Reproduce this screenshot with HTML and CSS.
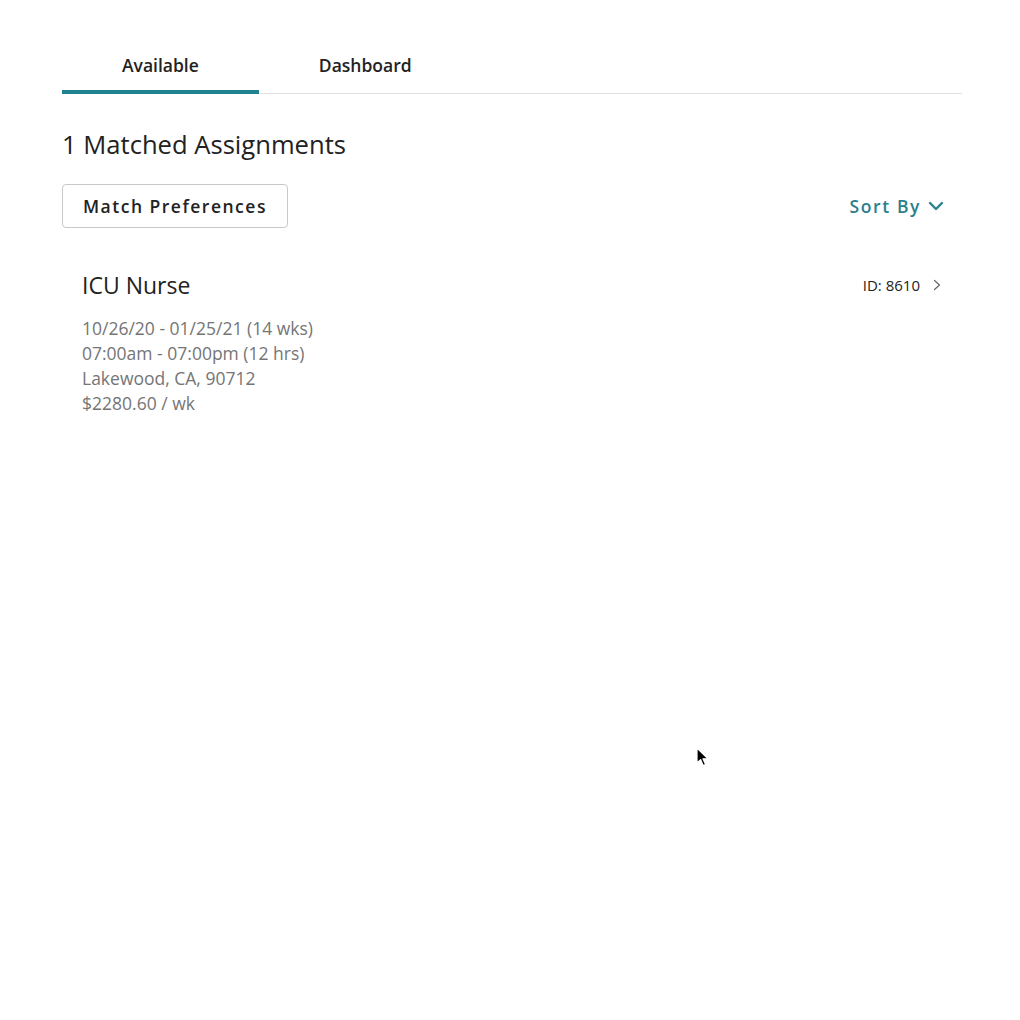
FILE: index.html
```html
<!DOCTYPE html>
<html lang="en">
<head>
    <meta charset="UTF-8">
    <meta name="viewport" content="width=device-width, initial-scale=1.0">
    <title>Assignments</title>
    <link rel="stylesheet" href="styles.css">
</head>
<body>
    <div class="page">
        <nav class="tabs">
            <a class="tab active" href="#">Available</a>
            <a class="tab" href="#">Dashboard</a>
        </nav>

        <h1 class="count">1 Matched Assignments</h1>

        <div class="toolbar">
            <button class="pref-button">Match Preferences</button>
            <button class="sort-button">
                Sort By
                <svg class="sort-chevron" width="16" height="16" viewBox="0 0 16 16">
                    <path d="M2 5l6 6 6-6" fill="none" stroke="currentColor" stroke-width="2.4" stroke-linecap="round" stroke-linejoin="round"/>
                </svg>
            </button>
        </div>

        <div class="assignment">
            <div class="assignment-head">
                <h2 class="assignment-title">ICU Nurse</h2>
                <div class="assignment-id">
                    ID: 8610
                    <svg width="9" height="14" viewBox="0 0 9 14">
                        <path d="M1.5 2.5l5 4.5-5 4.5" fill="none" stroke="#666" stroke-width="1.2" stroke-linecap="round" stroke-linejoin="round"/>
                    </svg>
                </div>
            </div>
            <div class="assignment-details">
                <div>10/26/20 - 01/25/21 (14 wks)</div>
                <div>07:00am - 07:00pm (12 hrs)</div>
                <div>Lakewood, CA, 90712</div>
                <div>$2280.60 / wk</div>
            </div>
        </div>
    </div>

    <svg class="cursor" width="14" height="22" viewBox="0 0 14 22">
        <path d="M1 1v15l3.6-3.4 2.6 6 2.4-1-2.6-5.8H12z" fill="#000" stroke="#fff" stroke-width="1.2" stroke-linejoin="round"/>
    </svg>
</body>
</html>
```

FILE: styles.css
```css
body {
    margin: 0;
    font-family: "Open Sans", "Noto Sans", sans-serif;
    color: #222;
    background: #fff;
}
.page {
    width: 900px;
    margin: 0 0 0 62px;
    padding-top: 40px;
}
.tabs {
    display: flex;
    border-bottom: 1px solid #e2e2e2;
}
.tab {
    display: block;
    padding: 14px 60px 14px;
    line-height: 22px;
    font-size: 17.5px;
    font-weight: 600;
    color: #222;
    text-decoration: none;
    border-bottom: 4px solid transparent;
    margin-bottom: -1px;
}
.tab.active {
    border-bottom-color: #1f8390;
}
.count {
    margin: 35px 0 0;
    font-size: 25.6px;
    line-height: 32px;
    font-weight: 400;
    color: #222;
}
.toolbar {
    display: flex;
    align-items: center;
    justify-content: space-between;
    margin-top: 23px;
}
.pref-button {
    height: 44px;
    padding: 0 20px;
    border: 1px solid #c8c8c8;
    border-radius: 4px;
    background: #fff;
    font-family: inherit;
    font-size: 17.5px;
    font-weight: 600;
    letter-spacing: 1.5px;
    color: #222;
    cursor: pointer;
}
.sort-button {
    display: flex;
    align-items: center;
    gap: 7px;
    margin-right: 18px;
    padding: 0;
    border: none;
    background: none;
    font-family: inherit;
    font-size: 17.5px;
    font-weight: 600;
    letter-spacing: 1.6px;
    color: #2c7f8c;
    cursor: pointer;
}
.sort-chevron {
    display: block;
}
.assignment {
    padding: 42px 20px 20px;
}
.assignment-head {
    display: flex;
    align-items: center;
    justify-content: space-between;
}
.assignment-title {
    margin: 0;
    font-size: 23px;
    line-height: 30px;
    font-weight: 400;
    color: #222;
}
.assignment-id {
    display: flex;
    align-items: center;
    gap: 13px;
    font-size: 15px;
    color: #222;
}
.assignment-id svg {
    display: block;
}
.assignment-details {
    margin-top: 16px;
    font-size: 17.5px;
    line-height: 25px;
    color: #757575;
}
.cursor {
    position: absolute;
    left: 696px;
    top: 747px;
}
```
